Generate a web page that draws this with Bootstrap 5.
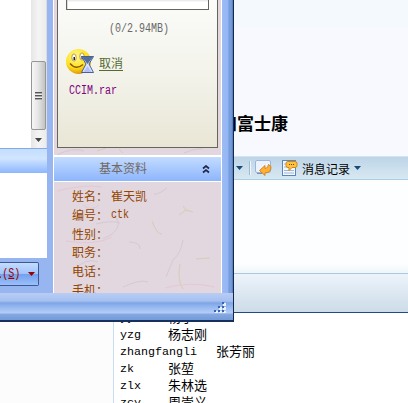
<!DOCTYPE html>
<html lang="zh-CN">
<head>
<meta charset="utf-8">
<title>消息记录</title>
<link href="https://cdn.jsdelivr.net/npm/bootstrap@5.3.0/dist/css/bootstrap.min.css" rel="stylesheet">
<style>
body{width:408px;height:403px;font:12px/19px "Liberation Mono","Noto Sans CJK SC",monospace;color:#000;background:#fff}
.desk{width:408px;height:403px}
.cn{font-family:"Noto Sans CJK SC",sans-serif;font-size:12px}
.roster{left:0;top:309px;width:408px;height:94px}
.roster-side{width:113px;background:#fcfcfc}
.roster-list{border-left:1px solid #c8dcf3;padding-left:6px;font-size:11.67px;line-height:19px}
.roster-list .cn{font-size:13px;line-height:15px;margin-left:-1px}
.roster-list .line{height:17px;white-space:nowrap}
.n1{width:49px}.n2{width:97px}
.chat{left:234px;top:0;width:174px;height:313px;border-bottom:1px solid #204c80;background:#fcfeff}
.chat-head{height:156px;background:linear-gradient(#f3f9fc 26px,#f7f9fe 27px)}
.chat-title{margin:111px 0 0 -14px;font:bold 17px/23px "Noto Sans CJK SC",sans-serif;white-space:nowrap}
.chat-tools{height:24px;background:linear-gradient(#bdd5e8,#d8e8f1);border-top:1px solid #d5e3ef;border-bottom:1px solid #a9d0e5}
.chat-body{height:93px;background:linear-gradient(#fcfeff 84px,#eef6f8)}
.chat-foot{height:39px;border-top:1px solid #abc9dd;background:linear-gradient(#edf3fb,#ccdce8)}
.tri{flex:none;width:7px;height:4px;background:#164b79;clip-path:polygon(0 0,100% 0,50% 100%)}
.tri-first{margin:0 6px 0 2px}
.history{margin:0 4px 0 2px}
.buddy{left:0;top:0;width:234px;height:322px;background:#96b5f1;border-right:1px solid #14284e;border-bottom:2px solid #18305c}
.left{width:47px;height:293px}
.feed{height:148px}
.feed-white{width:31px;background:#fff}
.scroll{width:16px;background:linear-gradient(90deg,#e6e6e6,#f4f4f4 50%,#ececec);border-right:1px solid #ddd}
.scroll .tri{background:#444}
.thumb{height:69px;margin-top:61px;border:1px solid #969696;border-radius:2px;background:linear-gradient(90deg,#f6f6f6,#e6e6e6 45%,#c3c3c3)}
.grip{width:7px;height:8px;background:repeating-linear-gradient(#555 0 1px,#aaa 1px 2px,#eee 2px 3px)}
.band{height:25px;background:linear-gradient(#c4deff,#d0e5ff 40%,#8cb6ff);border-top:1px solid #85aaea}
.blank{height:85px;background:#fff}
.send{width:39px;height:24px;margin-top:4px;border:1px solid #3c5a91;border-left:0;border-radius:0 2px 2px 0;background:linear-gradient(#c3dcff,#a2c4fb 48%,#73a1ed 52%,#9bc0fb);color:#900;white-space:nowrap}
.send-text{margin-left:-2px;font-size:10px;line-height:16px;transform:scaleY(1.25)}
.send-text i{display:inline-block;width:3px;height:1px;background:#900;vertical-align:-1px}
.send .tri{background:#900;margin-left:auto;margin-right:3px}
.gap{width:6px}
.mid{width:169px;height:293px;border-left:1px solid #fff;border-right:1px solid #fff;background:#e2d7df}
.texture{left:0;top:0}
.files{width:161px;height:148px;margin-left:3px;border:1px solid #66645f;border-top:0;background:linear-gradient(#fbfcf9,#f3f3eb 50%,#e9e6d5)}
.bar{width:143px;height:10px;margin-left:8px;border:1px solid #66645f;border-width:0 1px 1px;background:linear-gradient(#e9e9e9,#eee 1px,#fff 2px);box-shadow:inset 1px 0 #ddd}
.tall{display:inline-block;font-size:10px;transform:scaleY(1.2)}
.size{height:19px;margin-top:10px;color:#686868;padding-left:51px}
.cancel{color:#556b2f;text-decoration:underline;text-underline-offset:2px;line-height:19px;padding-top:2px}
.file{color:#800080;padding-left:11px;margin-top:7px;line-height:19px}
.sect{height:27px;margin-top:7px;border:solid #fff;border-width:2px 0 1px;background:linear-gradient(#c3dcff,#8db5fd);color:#706860;line-height:22px;padding-left:45px;width:167px}
.info{height:111px;padding:4px 0 0 18px;color:#944500}
.info .line{height:18.8px;line-height:19px;white-space:nowrap}
.info .key{width:39px}
.info .tall{font-family:"Liberation Mono",monospace}
.edge{width:11px;height:293px;background:linear-gradient(90deg,#9cbbf5 0 1px,#93b6f4 6px,#7299d9 7px,#7ba2df 9px,#5279b4)}
.status{height:27px;background:linear-gradient(#b9cdf3,#a4c0f1 8px,#7fa4e5 10px,#91b4ef 13px,#b4cdf7 20px,#86a9e1 21px,#729ad9)}
.resize{right:7px;top:8px}
</style>
<script src="https://cdn.jsdelivr.net/npm/bootstrap@5.3.0/dist/js/bootstrap.bundle.min.js"></script>
</head>
<body class="overflow-hidden">
<div class="desk position-relative overflow-hidden">
  <section class="roster position-absolute d-flex overflow-hidden">
    <div class="roster-side"></div>
    <div class="roster-list flex-grow-1">
      <div class="line d-flex"><span class="n1">yy</span><span class="cn">杨子</span></div>
      <div class="line d-flex"><span class="n1">yzg</span><span class="cn">杨志刚</span></div>
      <div class="line d-flex"><span class="n2">zhangfangli</span><span class="cn">张芳丽</span></div>
      <div class="line d-flex"><span class="n1">zk</span><span class="cn">张堃</span></div>
      <div class="line d-flex"><span class="n1">zlx</span><span class="cn">朱林选</span></div>
      <div class="line d-flex"><span class="n1">zcy</span><span class="cn">周崇义</span></div>
    </div>
  </section>

  <section class="chat position-absolute">
    <div class="chat-head overflow-hidden"><div class="chat-title">和富士康</div></div>
    <div class="chat-tools d-flex align-items-center">
      <span class="tri tri-first"></span>
      <svg width="51" height="22" viewBox="0 0 51 22">
        <path d="M.5 4v14" stroke="#9bbbd1"/><path d="M1.500 4v14" stroke="#eff7fc"/>
        <path d="M8 3.500h12q1.500 0 1.500 1.500v9q0 1.500-1.500 1.500H8Q6.500 15.500 6.500 14V5Q6.500 3.500 8 3.500z" fill="#edf3fd" stroke="#9db5da"/>
        <path d="M8 16.500h5" stroke="#7890b4"/>
        <path d="M10.500 13.500l5.500-5v3q3 0 3.500-4l2.500 2q.5 6-6 6.500v2.500z" fill="#ffb12d" stroke="#cc7614" stroke-width=".8"/>
        <rect x="33.500" y="3.500" width="13" height="15" fill="#f3f7ff" stroke="#5e86bd"/>
        <path d="M35 7h3M35 10h3M35 13.500h10M35 16h10" stroke="#a1b6d4"/>
        <path d="M39 4.500h7q2 0 2 2v2q0 2-2 2h-3l-3 3v-3h-1q-2 0-2-2v-2q0-2 2-2z" fill="#ffc13f" stroke="#cf890f"/>
        <path d="M40 7.500h1m1 0h1m1 0h1" stroke="#754500"/>
      </svg>
      <span class="cn history text-nowrap">消息记录</span><span class="tri"></span>
    </div>
    <div class="chat-body"></div>
    <div class="chat-foot"></div>
  </section>

  <section class="buddy position-absolute">
    <div class="d-flex">
      <div class="left">
        <div class="feed d-flex">
          <div class="feed-white"></div>
          <div class="scroll d-flex flex-column">
            <div class="thumb d-flex align-items-center justify-content-center"><span class="grip"></span></div>
            <span class="tri mx-auto mt-2"></span>
          </div>
        </div>
        <div class="band"></div><div class="blank"></div>
        <div class="send d-flex align-items-center overflow-hidden"><span class="send-text"><i></i>&#8202;&#8202;(<u>S</u>)</span><span class="tri"></span></div>
      </div>
      <div class="gap"></div>
      <div class="mid position-relative overflow-hidden">
        <svg class="texture position-absolute" width="167" height="293" fill="none" stroke="#c9bdc9" stroke-width="1" opacity=".5">
          <path d="M3 155q15-8 27-4M130 153q12-5 19-4M113 188q-9 7-13 6M60 215q10 10-2 19l-9 5M129 240q-2 13-10 20l-7 17M75 242q11 0 11 7M42 224q15-4 24-1M20 270q12-13 24-8M69 287q17-8 25-5"/>
          <path d="M125 215l7-5m-3-4l3 4 7 2M98 221q5 14 10 13M142 259l14-1M43 151l9-3M126 264q-3 16 3 25M65 149l4 4" stroke="#cfc38c"/>
          <path d="M3 191q28-7 45-4M12 241q30 5 46-4M111 288q25-7 50-1M29 205q8 7 16 0" stroke="#e9b9c9"/>
        </svg>
        <div class="position-relative">
          <div class="files">
            <div class="bar"></div>
            <div class="size"><span class="tall">(0/2.94MB)</span></div>
            <div class="d-flex align-items-center mt-2">
              <svg class="ms-2" width="29" height="28" viewBox="0 0 29 28">
                <defs><radialGradient id="face" cx=".4" cy=".3" r=".75"><stop stop-color="#fff89a"/><stop offset=".6" stop-color="#ffe11d"/><stop offset="1" stop-color="#d88b00"/></radialGradient></defs>
                <circle cx="12.500" cy="14.500" r="12.500" fill="url(#face)"/>
                <ellipse cx="8" cy="10.500" rx="2.200" ry="3.600" fill="#fff" stroke="#a9821b" stroke-width=".8"/><ellipse cx="16" cy="9.500" rx="2.200" ry="3.600" fill="#fff" stroke="#a9821b" stroke-width=".8"/>
                <path d="M7.500 10h1.500v3H7.500zM15.500 9H17v3h-1.500z" fill="#222"/>
                <path d="M4 16.500q6 7 13 1" fill="none" stroke="#885600" stroke-width="1.300"/>
                <path d="M15.500 9.500h12L23 17l4.500 8.500h-12L20 17z" fill="#dce5ff" stroke="#3a5287" stroke-width=".9"/><path d="M16 10h11l-5.500 7z" fill="#536f9d"/><path d="M21.500 19l4 6h-8z" fill="#b5c0f8"/>
              </svg>
              <span class="cn cancel ms-1">取消</span>
            </div>
            <div class="file"><span class="tall">CCIM.rar</span></div>
          </div>
          <div class="sect cn d-flex justify-content-between"><span>基本资料</span>
            <svg class="mt-2 me-2" width="14" height="12" fill="none" stroke="#202747" stroke-width="1.700"><path d="M4 3.500L7 1l3 2.500M4 7.500L7 5l3 2.500"/></svg>
          </div>
          <div class="info cn">
            <div class="line d-flex"><span class="key">姓名：</span><span>崔天凯</span></div>
            <div class="line d-flex"><span class="key">编号：</span><span class="tall">ctk</span></div>
            <div class="line">性别：</div><div class="line">职务：</div><div class="line">电话：</div><div class="line">手机：</div>
          </div>
        </div>
      </div>
      <div class="edge"></div>
    </div>
    <div class="status position-relative">
      <svg class="resize position-absolute" width="13" height="12"><path fill="#e9f2ff" d="M10 2h3v3h-3zM6 6h3v3H6zM10 6h3v3h-3zM2 10h3v2H2zM6 10h3v2H6zM10 10h3v2h-3z"/><path fill="#3c62b1" d="M9 1h2v2H9zM5 5h2v2H5zM9 5h2v2H9zM1 9h2v2H1zM5 9h2v2H5zM9 9h2v2H9z"/></svg>
    </div>
  </section>
</div>
</body>
</html>
